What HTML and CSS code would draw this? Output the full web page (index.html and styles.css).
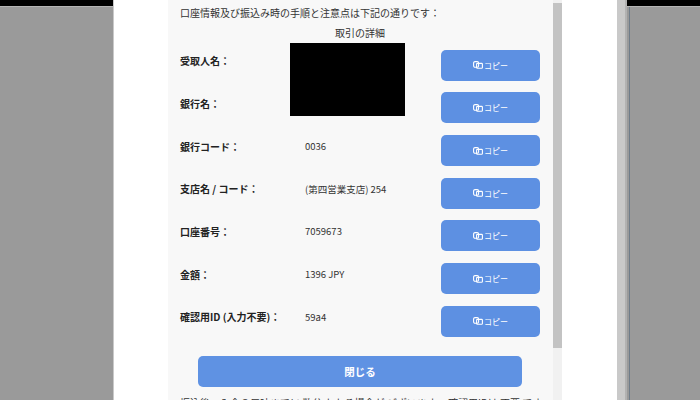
FILE: index.html
```html
<!DOCTYPE html>
<html lang="ja">
<head>
<meta charset="utf-8">
<title>取引の詳細</title>
<link rel="stylesheet" href="styles.css">
</head>
<body>
<div class="screen">
  <div class="backdrop left"><div class="topbar"></div></div>
  <div class="modal">
    <div class="content">
      <p class="intro">口座情報及び振込み時の手順と注意点は下記の通りです：</p>
      <p class="title">取引の詳細</p>
      <div class="details">
        <div class="redact"></div>

        <div class="label">受取人名：</div>
        <button class="copy"><svg class="ico" viewBox="0 0 10 8" width="10" height="8"><rect x="0.6" y="0.6" width="5" height="5.6" rx="1.4" fill="none" stroke="#fff" stroke-width="1.1"/><rect x="3.6" y="2.4" width="5.8" height="4.8" rx="0.8" fill="none" stroke="#fff" stroke-width="1.1"/></svg><span>コピー</span></button>

        <div class="label">銀行名：</div>
        <button class="copy"><svg class="ico" viewBox="0 0 10 8" width="10" height="8"><rect x="0.6" y="0.6" width="5" height="5.6" rx="1.4" fill="none" stroke="#fff" stroke-width="1.1"/><rect x="3.6" y="2.4" width="5.8" height="4.8" rx="0.8" fill="none" stroke="#fff" stroke-width="1.1"/></svg><span>コピー</span></button>

        <div class="label">銀行コード：</div>
        <div class="value">0036</div>
        <button class="copy"><svg class="ico" viewBox="0 0 10 8" width="10" height="8"><rect x="0.6" y="0.6" width="5" height="5.6" rx="1.4" fill="none" stroke="#fff" stroke-width="1.1"/><rect x="3.6" y="2.4" width="5.8" height="4.8" rx="0.8" fill="none" stroke="#fff" stroke-width="1.1"/></svg><span>コピー</span></button>

        <div class="label">支店名 / コード：</div>
        <div class="value">(第四営業支店) 254</div>
        <button class="copy"><svg class="ico" viewBox="0 0 10 8" width="10" height="8"><rect x="0.6" y="0.6" width="5" height="5.6" rx="1.4" fill="none" stroke="#fff" stroke-width="1.1"/><rect x="3.6" y="2.4" width="5.8" height="4.8" rx="0.8" fill="none" stroke="#fff" stroke-width="1.1"/></svg><span>コピー</span></button>

        <div class="label">口座番号：</div>
        <div class="value">7059673</div>
        <button class="copy"><svg class="ico" viewBox="0 0 10 8" width="10" height="8"><rect x="0.6" y="0.6" width="5" height="5.6" rx="1.4" fill="none" stroke="#fff" stroke-width="1.1"/><rect x="3.6" y="2.4" width="5.8" height="4.8" rx="0.8" fill="none" stroke="#fff" stroke-width="1.1"/></svg><span>コピー</span></button>

        <div class="label">金額：</div>
        <div class="value">1396 JPY</div>
        <button class="copy"><svg class="ico" viewBox="0 0 10 8" width="10" height="8"><rect x="0.6" y="0.6" width="5" height="5.6" rx="1.4" fill="none" stroke="#fff" stroke-width="1.1"/><rect x="3.6" y="2.4" width="5.8" height="4.8" rx="0.8" fill="none" stroke="#fff" stroke-width="1.1"/></svg><span>コピー</span></button>

        <div class="label">確認用ID (入力不要)：</div>
        <div class="value">59a4</div>
        <button class="copy"><svg class="ico" viewBox="0 0 10 8" width="10" height="8"><rect x="0.6" y="0.6" width="5" height="5.6" rx="1.4" fill="none" stroke="#fff" stroke-width="1.1"/><rect x="3.6" y="2.4" width="5.8" height="4.8" rx="0.8" fill="none" stroke="#fff" stroke-width="1.1"/></svg><span>コピー</span></button>
      </div>
      <button class="close">閉じる</button>
      <p class="note">振込後、入金の反映までに 数分 かかる場合が ございます。 確認用IDは 不要 です。</p>
    </div>
    <div class="scroll"><div class="thumb"></div></div>
  </div>
  <div class="edge"></div>
  <div class="backdrop right"><div class="topbar"></div><div class="rline"></div></div>
</div>
</body>
</html>
```

FILE: styles.css
```css
html, body {
  margin: 0;
  padding: 0;
  width: 700px;
  height: 400px;
  overflow: hidden;
  font-family: "Noto Sans CJK JP", "Noto Sans", sans-serif;
}

.screen {
  display: flex;
  width: 700px;
  height: 400px;
  overflow: hidden;
}

.backdrop {
  background: #9a9a9a;
  display: flex;
  flex-direction: column;
}

.left {
  width: 114px;
  border-right: 1px solid #c9c9c9;
  box-sizing: border-box;
}

.topbar {
  height: 6px;
  background: #000;
  border-bottom: 1px solid #b5b5b5;
  flex: none;
}

.right {
  flex: 1;
}

.rline {
  flex: 1;
  margin-left: 2px;
  border-left: 1px solid #6f7c89;
  background: #9a9a9a;
}

.edge {
  width: 8px;
  background: #c9c9c9;
  border-right: 2px solid #b2b2b2;
}

.modal {
  width: 503px;
  box-sizing: border-box;
  padding-left: 54px;
  padding-right: 55px;
  background: #fff;
  display: flex;
  flex: none;
}

.content {
  width: 385px;
  height: 400px;
  box-sizing: border-box;
  padding: 6px 13px 0 12px;
  background: #f8f8f8;
  color: #2a2a2a;
  font-size: 10px;
  overflow: hidden;
}

.intro {
  margin: 0;
  line-height: 14px;
  color: #333;
}

.title {
  margin: 6px 0 0;
  line-height: 14px;
  text-align: center;
  color: #333;
}

.details {
  margin-top: 4px;
  display: grid;
  grid-template-columns: 125px 136px 99px;
  grid-auto-rows: 42.67px;
  align-items: center;
}

.label {
  grid-column: 1;
  font-weight: 700;
  padding-bottom: 9px;
  color: #222;
  white-space: nowrap;
}

.value {
  grid-column: 2;
  padding-bottom: 9px;
  color: #333;
  font-size: 9.5px;
  white-space: nowrap;
}

.redact {
  grid-column: 2;
  grid-row: 1 / span 2;
  align-self: start;
  width: 115px;
  height: 73px;
  margin-left: -15px;
  margin-top: -1px;
  background: #000;
}

.copy {
  grid-column: 3;
  height: 31px;
  width: 99px;
  border: none;
  border-radius: 5px;
  background: #5d90e2;
  color: #fff;
  font-family: inherit;
  font-size: 8px;
  display: flex;
  align-items: center;
  justify-content: center;
  gap: 1px;
  padding: 0;
}

.ico {
  display: block;
}

.close {
  display: block;
  width: 324px;
  height: 31px;
  margin: 13px auto 0;
  border: none;
  border-radius: 5px;
  background: #5f92e3;
  color: #fff;
  font-family: inherit;
  font-size: 10.5px;
  font-weight: 700;
  padding: 0;
}

.note {
  margin: 9px 0 0;
  line-height: 14px;
  color: #333;
  white-space: nowrap;
}

.scroll {
  width: 9px;
  height: 400px;
  background: #f1f1f1;
  flex: none;
}

.thumb {
  margin-top: 3px;
  height: 345px;
  background: #c3c3c3;
}
```
